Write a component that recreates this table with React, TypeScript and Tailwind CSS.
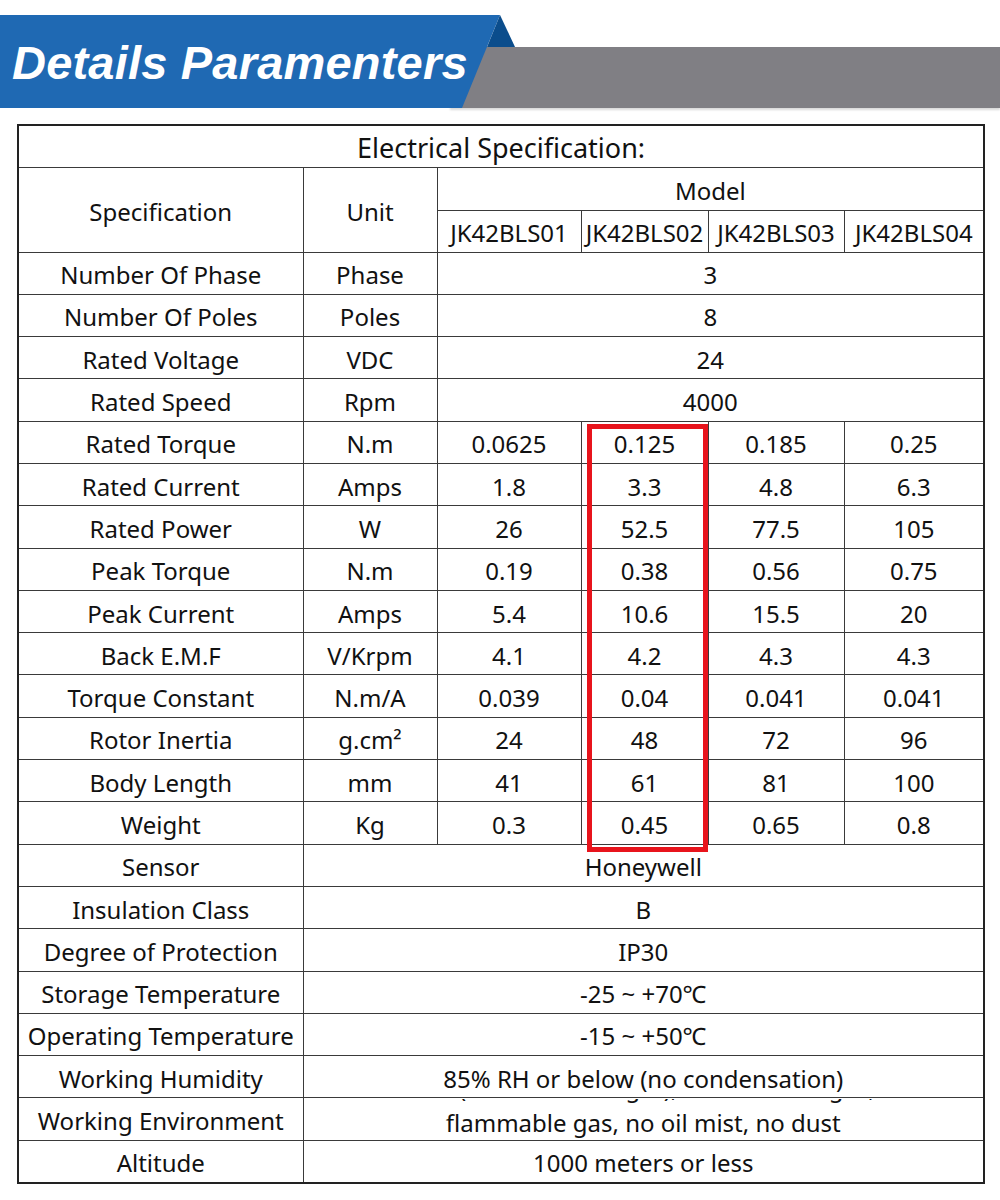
const font = { fontFamily: '"Noto Sans", "Open Sans", sans-serif' };

type Row = { name: string; unit?: string; values: string[] };

const rows: Row[] = [
  { name: "Number Of Phase", unit: "Phase", values: ["3"] },
  { name: "Number Of Poles", unit: "Poles", values: ["8"] },
  { name: "Rated Voltage", unit: "VDC", values: ["24"] },
  { name: "Rated Speed", unit: "Rpm", values: ["4000"] },
  { name: "Rated Torque", unit: "N.m", values: ["0.0625", "0.125", "0.185", "0.25"] },
  { name: "Rated Current", unit: "Amps", values: ["1.8", "3.3", "4.8", "6.3"] },
  { name: "Rated Power", unit: "W", values: ["26", "52.5", "77.5", "105"] },
  { name: "Peak Torque", unit: "N.m", values: ["0.19", "0.38", "0.56", "0.75"] },
  { name: "Peak Current", unit: "Amps", values: ["5.4", "10.6", "15.5", "20"] },
  { name: "Back E.M.F", unit: "V/Krpm", values: ["4.1", "4.2", "4.3", "4.3"] },
  { name: "Torque Constant", unit: "N.m/A", values: ["0.039", "0.04", "0.041", "0.041"] },
  { name: "Rotor Inertia", unit: "g.cm²", values: ["24", "48", "72", "96"] },
  { name: "Body Length", unit: "mm", values: ["41", "61", "81", "100"] },
  { name: "Weight", unit: "Kg", values: ["0.3", "0.45", "0.65", "0.8"] },
  { name: "Sensor", values: ["Honeywell"] },
  { name: "Insulation Class", values: ["B"] },
  { name: "Degree of Protection", values: ["IP30"] },
  { name: "Storage Temperature", values: ["-25 ~ +70℃"] },
  { name: "Operating Temperature", values: ["-15 ~ +50℃"] },
  { name: "Working Humidity", values: ["85% RH or below (no condensation)"] },
];

const cell = "border border-[#3a3a3a] text-center p-0 pt-[4px] leading-[30px] whitespace-nowrap";

function Banner() {
  return (
    <div className="relative h-[108px] pt-[47px]">
      <div className="ml-[450px] h-[61px] bg-[#807f84] shadow-[0_2px_2px_rgba(0,0,0,0.15)]" />
      <div className="absolute left-0 top-[15px] h-[93px] w-[520px] bg-[#1f69b3] [clip-path:polygon(0_0,500px_0,462px_93px,0_93px)]">
        <h1
          className="pl-[12px] pt-[23px] text-[47px] font-bold italic leading-[50px] text-white tracking-[0.2px]"
          style={{ fontFamily: '"Liberation Sans", Arial, sans-serif' }}
        >
          Details Paramenters
        </h1>
      </div>
      <div className="absolute left-[486px] top-[15px] h-[32px] w-[30px] bg-[#0b4d8c] [clip-path:polygon(14px_0,29px_32px,1px_32px)]" />
    </div>
  );
}

export default function App() {
  return (
    <div className="w-[1000px] h-[1200px] bg-white text-[#111]" style={font}>
      <Banner />
      <div className="relative ml-[17px] mt-[16px] w-[966px]">
        <table className="table-fixed border-collapse w-[966px] border-2 border-[#222] text-[24px]">
          <colgroup>
            <col className="w-[285px]" />
            <col className="w-[134px]" />
            <col className="w-[144px]" />
            <col className="w-[127px]" />
            <col className="w-[136px]" />
            <col className="w-[140px]" />
          </colgroup>
          <tbody>
            <tr className="h-[42px]">
              <td colSpan={6} className={cell + " text-[27px] border-t-[#bbb]"}>
                Electrical Specification:
              </td>
            </tr>
            <tr className="h-[43px]">
              <td rowSpan={2} className={cell}>Specification</td>
              <td rowSpan={2} className={cell}>Unit</td>
              <td colSpan={4} className={cell}>Model</td>
            </tr>
            <tr className="h-[42px]">
              <td className={cell}>JK42BLS01</td>
              <td className={cell}>JK42BLS02</td>
              <td className={cell}>JK42BLS03</td>
              <td className={cell}>JK42BLS04</td>
            </tr>
            {rows.map((r) => (
              <tr key={r.name} className="h-[42.3px]">
                <td className={cell}>{r.name}</td>
                {r.unit && <td className={cell}>{r.unit}</td>}
                {r.values.length === 1 ? (
                  <td colSpan={r.unit ? 4 : 5} className={cell}>
                    {r.values[0]}
                  </td>
                ) : (
                  r.values.map((v, i) => (
                    <td key={i} className={cell}>
                      {v}
                    </td>
                  ))
                )}
              </tr>
            ))}
            <tr className="h-[42.3px]">
              <td className={cell}>Working Environment</td>
              <td colSpan={5} className="border border-[#3a3a3a] p-0">
                <div className="h-[41px] overflow-hidden flex flex-col justify-end items-center leading-[35px] whitespace-nowrap">
                  <span>Indoor (no direct sunlight), no corrosive gas, no</span>
                  <span>flammable gas, no oil mist, no dust</span>
                </div>
              </td>
            </tr>
            <tr className="h-[42.3px]">
              <td className={cell}>Altitude</td>
              <td colSpan={5} className={cell}>1000 meters or less</td>
            </tr>
          </tbody>
        </table>
        <div className="absolute left-[570px] top-[300px] h-[428px] w-[121px] border-[5px] border-[#e8141c]" />
      </div>
    </div>
  );
}
